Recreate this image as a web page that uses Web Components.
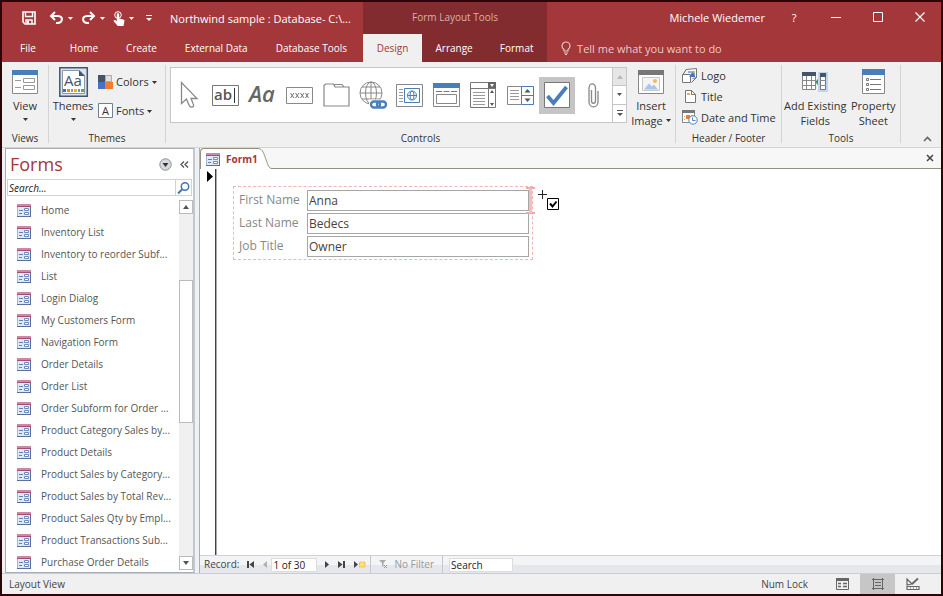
<!DOCTYPE html>
<html lang="en">
<head>
<meta charset="utf-8">
<title>Northwind sample : Database</title>
<style>
    html, body { margin: 0; height: 100%; }
    body {
        font-family: "Open Sans", "Noto Sans", sans-serif;
        font-size: 11px;
        line-height: 15px;
        color: #444;
        overflow: hidden;
        --red: #a4373a;
        --dark-red: #832c2f;
        --chrome: #f0f0f0;
        --line: #d4d4d4;
    }
</style>
</head>
<body>
<access-window></access-window>

<script>
// name: [width, height, markup]
const ICONS = {
    save: [14, 14, `<path fill="none" stroke="#fff" stroke-width="1.600" d="M1 1h12v12H3l-2-2z"/><path fill="none" stroke="#fff" stroke-width="1.400" d="M3.500 1v4.500h7V1M4 13V9h6v4"/><path fill="#fff" d="M5 10h2v3H5z"/>`],
    undo: [15, 14, `<path fill="none" stroke="#fff" stroke-width="2" d="M2 5h7c6 0 5 8-2 7"/><path fill="none" stroke="#fff" stroke-width="2" d="M6 1L2 5l4 4"/>`],
    redo: [15, 14, `<path fill="none" stroke="#fff" stroke-width="2" d="M13 5H6c-6 0-5 8 2 7"/><path fill="none" stroke="#fff" stroke-width="2" d="M9 1l4 4-4 4"/>`],
    touch: [12, 15, `<circle cx="5" cy="4" r="3.300" fill="none" stroke="#fff"/><path fill="#fff" d="M3.800 3.500c0-1.600 2.400-1.600 2.400 0v4l4 1c1 .2 1.400.8 1.200 1.700L10.500 15H4.800L.8 10.500c-.6-1 .8-2 1.700-1.200l1.300 1z"/>`],
    caret: [5, 3, `<path fill="currentColor" d="M0 0h5L2.500 3z"/>`],
    caretUp: [6, 4, `<path fill="currentColor" d="M0 4h6L3 0z"/>`],
    caretDown: [6, 4, `<path fill="currentColor" d="M0 0h6L3 4z"/>`],
    custom: [6, 6, `<path fill="currentColor" d="M0 0h6v1H0zM0 3h6L3 6z"/>`],
    min: [10, 10, `<path stroke="#fff" d="M0 5.500h10"/>`],
    max: [10, 10, `<path fill="none" stroke="#fff" d="M.5.5h9v9h-9z"/>`],
    close: [10, 10, `<path stroke="#fff" stroke-width="1.200" d="M.5.5l9 9M9.500.5l-9 9"/>`],
    bulb: [10, 14, `<path fill="none" stroke="#e9c9ca" stroke-width="1.200" d="M3 10V8.500C1.500 7.500 1 6.500 1 5a4 4 0 018 0c0 1.500-.5 2.500-2 3.500V10zM3 12h4M4 13.500h2"/>`],
    view: [26, 24, `<path fill="#fff" stroke="#8a8a8a" d="M.5.5h25v23H.5z"/><path fill="#4a7ebb" d="M0 0h26v5H0z"/><path fill="none" stroke="#9a9a9a" d="M3 10.500h6M3 17.500h6M11.500 8.500h11v4h-11zM11.500 15.500h11v4h-11z"/>`],
    themes: [29, 30, `<path fill="#d9e3f0" stroke="#44546a" stroke-width="1.500" d="M.8.8h27.500v28.500H.8z"/><path fill="#fff" stroke="#8a96a8" d="M3.500 3.500H20l5.500 5.500v17.500h-22z"/><path fill="#44546a" d="M20 3l6 6h-6z"/><text x="5" y="19" font-family="Open Sans, sans-serif" font-size="15" fill="#44546a">Aa</text><path fill="#3f6fbf" d="M4 22h3v3H4z"/><path fill="#ed7d31" d="M8 22h3v3H8z"/><path fill="#999" d="M12 22h2v3h-2z"/><path fill="#f4b400" d="M15 22h3v3h-3z"/><path fill="#5b9bd5" d="M19 22h2v3h-2z"/><path fill="#6aa84f" d="M22 22h3v3h-3z"/>`],
    colors: [15, 14, `<path fill="#44546a" d="M0 0h7v7H0z"/><path fill="#e0e0e0" stroke="#aaa" d="M7.500.5h6v6h-6z"/><path fill="#4472c4" d="M0 7h7v7H0z"/><path fill="#ed7d31" d="M7 7h8v7H7z"/>`],
    fonts: [15, 15, `<path fill="#fff" stroke="#6f7f96" d="M.5.5h14v14H.5z"/><text x="7.500" y="11.500" text-anchor="middle" font-family="Open Sans, sans-serif" font-size="11" fill="#333">A</text>`],
    pointer: [18, 28, `<path fill="#fff" stroke="#888" stroke-width="1.300" d="M1.500 1.500v21l5-4.500c1.500 3 2 7.500 4.500 8 3 .5 3-2 2-3.500L11 17.500h6z"/>`],
    textbox: [27, 21, `<path fill="#fff" stroke="#777" d="M.5.5h26v20H.5z"/><text x="2" y="15" font-family="Open Sans, sans-serif" font-size="15" font-weight="600" fill="#555">ab</text><path stroke="#333" d="M22.500 3v15"/>`],
    label: [27, 20, `<text x="0" y="17" font-family="Open Sans, sans-serif" font-style="italic" font-size="22" font-weight="600" fill="#666">Aa</text>`],
    xbutton: [27, 17, `<path fill="#fff" stroke="#888" d="M.5.5h26v16H.5z"/><path fill="none" stroke="#666" stroke-width=".9" d="M4.500 6l3.500 5M8 6l-3.500 5M9.500 6l3.500 5M13 6l-3.500 5M14.500 6l3.500 5M18 6l-3.500 5M19.500 6l3 5M22.500 6l-3 5"/>`],
    tabs: [27, 24, `<path fill="#fff" stroke="#888" stroke-width="1.200" d="M1 23V2.500L2.500 1h8L12 4h14v19zM12 4l-1-2.500h8L21 4"/>`],
    globe: [29, 28, `<g fill="none" stroke="#888"><circle cx="12" cy="12" r="11"/><ellipse cx="12" cy="12" rx="5.500" ry="11"/><path d="M1 12h22M3 6h18M3 18h18M12 1v22"/></g><path fill="#fff" d="M10 18.500h19V28H10z"/><g fill="none" stroke="#4a7ebb" stroke-width="2.400"><rect x="12" y="20.500" width="9" height="6" rx="3"/><rect x="18" y="20.500" width="9" height="6" rx="3"/></g>`],
    web: [27, 23, `<path fill="#fff" stroke="#888" d="M.5.5h26v22H.5z"/><path stroke="#999" d="M3 5.500h4M3 8.500h4M3 11.500h4M3 14.500h4M3 17.500h4"/><path fill="#fff" stroke="#4a7ebb" d="M8.500 4.500h15v14h-15z"/><g fill="none" stroke="#4a7ebb"><circle cx="16" cy="11.500" r="4.500"/><ellipse cx="16" cy="11.500" rx="2" ry="4.500"/><path d="M11 11.500h10"/></g>`],
    navctl: [27, 24, `<path fill="#fff" stroke="#888" d="M.5.5h26v23H.5z"/><path fill="#4a7ebb" d="M0 0h27v5H0z"/><path stroke="#777" d="M3 8.500h6M10.500 8.500h6M18 8.500h6"/><path fill="#fff" stroke="#888" d="M3.500 11.500h20v9h-20z"/>`],
    combo: [27, 26, `<path fill="#fff" stroke="#777" d="M.5.5h25v25H.5z"/><path fill="#666" d="M18 0h8v6h-8z"/><path fill="#fff" d="M20 2h4l-2 3z"/><path stroke="#777" d="M0 6.500h26M18.500 6v20"/><path stroke="#999" d="M3 10.500h12M3 13.500h12M3 16.500h12M3 19.500h12M3 22.500h12"/><path fill="#555" d="M20 11h4l-2-3zM20 21h4l-2 3z"/>`],
    list: [27, 19, `<path fill="#fff" stroke="#888" d="M.5.500h26v18H.5z"/><path stroke="#999" d="M3 4.500h9M3 7.500h9M3 10.500h9M3 13.500h9"/><path fill="#fff" stroke="#4a7ebb" d="M14.500.5h12v18h-12zM14 9.500h13"/><path fill="#555" d="M17.500 6.500h6l-3-3.500zM17.500 12.500h6l-3 3.500z"/>`],
    check: [26, 26, `<path fill="#fff" stroke="#777" d="M.5.5h25v25H.5z"/><path fill="none" stroke="#4a7ebb" stroke-width="3.800" d="M3.500 14l6 7L22.500 5"/>`],
    clip: [11, 25, `<path fill="none" stroke="#888" stroke-width="1.300" d="M3.500 7v11c0 3 4 3 4 0V5c0-5.500-6.500-5.500-6.500 0v14c0 6.500 9 6.500 9 0V8"/>`],
    image: [26, 24, `<path fill="#fff" stroke="#888" d="M.5.500h25v23H.5z"/><path fill="#777" d="M0 0h26v5H0z"/><path fill="#f4f4f4" stroke="#c8c8c8" d="M4.500 7.500h17v13h-17z"/><path fill="#a9c4e6" d="M6 19.500l5-6 3 3 2-2 4 5z"/><circle cx="17" cy="11" r="2" fill="#f2b661"/>`],
    logo: [16, 15, `<path fill="#fff" stroke="#777" d="M4.500 1.500l10-1v9l-4 1M.5 6.500h8v8h-8z"/><path fill="#8fb1dc" d="M6 3h7v5H9V5H6z"/><path fill="#4472c4" d="M7 9l4-5 2 4v1z"/><circle cx="12" cy="4" r="1" fill="#f0ad4e"/><path fill="none" stroke="#666" d="M4.500 1L1 6.500M14.500 9.500l-5 5"/>`],
    title: [11, 13, `<path fill="#fff" stroke="#777" d="M.5.500h6l4 4v8H.5z"/><path fill="none" stroke="#777" d="M6.500.5v4h4"/><path fill="#f0a95b" d="M2 3h3v2H2z"/>`],
    date: [16, 15, `<path fill="#fff" stroke="#888" d="M.5 1.500h12v11H.5z"/><path fill="#777" d="M0 0h13v3H0z"/><path fill="#ed7d31" d="M4 5h4v4H4z"/><path stroke="#aaa" d="M2 6.500h1M2 9.500h1M9 5.500h2"/><circle cx="11" cy="10" r="4.200" fill="#fff" stroke="#4a86c5"/><path fill="none" stroke="#4a86c5" d="M10.500 7.500v3h3"/>`],
    fields: [26, 20, `<path fill="#fff" stroke="#888" d="M.5.500h13v17H.5z"/><path fill="#44546a" d="M0 0h14v4H0z"/><path stroke="#888" d="M0 8.500h14M0 13.500h14M4.500 4v14M9.500 4v14"/><path fill="#bdd5ee" d="M16 0h10v20H16z"/><path fill="#fff" stroke="#777" d="M18.500 2.500h5v15h-5z"/><path fill="#44546a" d="M18 1h6v4h-6z"/><path stroke="#888" d="M18 8.500h6M18 13.500h6"/><path fill="#3c9a6a" d="M13 10l3-3v6z"/>`],
    sheet: [23, 25, `<path fill="#fff" stroke="#888" d="M.5.500h22v24H.5z"/><path fill="#4a7ebb" d="M0 0h23v6H0z"/><path stroke="#777" d="M8 10.500h11M8 15.500h11M8 20.500h11"/><path fill="#fff" stroke="#777" d="M4.500 9.500h2v2h-2zM4.500 14.500h2v2h-2zM4.500 19.500h2v2h-2z"/>`],
    collapse: [9, 6, `<path fill="none" stroke="#666" stroke-width="1.600" d="M1 5l3.500-3.500L8 5"/>`],
    form: [14, 13, `<path fill="#dfe8f6" d="M0 3h14v10H0z"/><path fill="#c98aa8" d="M0 0h14v3H0z"/><path fill="#a84a76" d="M0 2h14v1H0z"/><path fill="none" stroke="#a9b6cf" d="M.5 3v9"/><path fill="none" stroke="#5b6f9f" d="M0 12.500h14M13.500 3v10"/><path stroke="#5f7fb5" d="M2 6.500h4M2 9.500h3"/><path fill="#fff" stroke="#6f8ab8" d="M7.500 4.500h4v2h-4zM7.500 8.500h4v2h-4z"/>`],
    round: [13, 13, `<circle cx="6.500" cy="6.500" r="5.700" fill="#d7d9de" stroke="#8e9096"/><path fill="#333" d="M3.500 5h6l-3 4z"/>`],
    chevrons: [9, 7, `<path fill="none" stroke="#555" stroke-width="1.300" d="M4 .5l-3 3 3 3M8 .5l-3 3 3 3"/>`],
    search: [13, 12, `<circle cx="8" cy="4.500" r="3.700" fill="#fff" stroke="#4573b5" stroke-width="1.500"/><path stroke="#4573b5" stroke-width="2" d="M5 7.500l-4 4"/>`],
    x: [8, 8, `<path stroke="#444" stroke-width="1.500" d="M1 1l6 6M7 1L1 7"/>`],
    current: [6, 11, `<path d="M0 0l6 5.500L0 11z"/>`],
    first: [7, 7, `<path fill="#444" d="M0 0h2v7H0zM7 0v7L2.500 3.500z"/>`],
    prev: [4, 7, `<path fill="#b0b0b0" d="M4 0v7L0 3.500z"/>`],
    next: [4, 7, `<path fill="#444" d="M0 0v7l4-3.500z"/>`],
    last: [7, 7, `<path fill="#444" d="M5 0h2v7H5zM0 0v7l4.500-3.500z"/>`],
    add: [12, 7, `<path fill="#444" d="M0 0v7l4-3.500z"/><path fill="#ffe07a" stroke="#e8b93c" stroke-dasharray="2 1" d="M5.500 1h5.500v5H5.500z"/>`],
    filter: [9, 9, `<path fill="#aaa" d="M0 0h7L4.500 3v4L3 6V3z"/><path stroke="#999" d="M5 5l3 3M8 5L5 8"/>`],
    formView: [13, 12, `<path fill="none" stroke="#666" d="M.5.500h12v11H.5z"/><path fill="#666" d="M0 0h13v3H0z"/><path stroke="#666" stroke-width="1.400" d="M2 5.500h3M7 5.500h4M2 8.500h3M7 8.500h4"/>`],
    layoutView: [12, 12, `<path fill="none" stroke="#666" d="M1.500 0v12M10.500 0v12M0 1.500h12M0 10.500h12M3 4.500h6M3 7.500h6"/>`],
    designView: [14, 12, `<path fill="none" stroke="#666" stroke-width="1.200" d="M1 1v6l5-1zM1 8.500h12v3H1zM4 10h1M7 10h1M10 10h1"/><path stroke="#666" stroke-width="1.800" d="M6 6l6-5.500"/>`],
    dropper: [21, 20, `<path stroke="#222" d="M4.500 0v9M0 4.500h9"/><path fill="#fff" stroke="#000" d="M9.500 8.500h11v11h-11z"/><path fill="none" stroke="#000" stroke-width="2" d="M12 13.500l2.500 3 4-5"/>`],
    column: [9, 27, `<path stroke="#f4a6a8" stroke-width="2" d="M0 1h9M0 26h9"/><path stroke="#f7bcbd" stroke-width="3" d="M4.500 1v25"/>`],
    tabEdge: [14, 21, `<path fill="#fff" d="M0 0c5 0 6 7 9 14 2 5 2 6.500 5 6.500V21H0z"/><path fill="none" stroke="#979080" d="M0 .5c5 0 6 6 8 11 2 6 3 9 6 9"/>`]
};

const BUTTON = `button { font: inherit; color: inherit; background: none; border: 0; padding: 0; margin: 0; line-height: inherit; }`;

class AccessIcon extends HTMLElement {
    constructor() {
        super();
        this.attachShadow({ mode: "open" });
    }

    connectedCallback() {
        const [w, h, body] = ICONS[this.getAttribute("name")];
        this.shadowRoot.innerHTML = `
        <style>
            :host { display: block; flex: none; line-height: 0; }
            svg { display: block; overflow: visible; }
        </style>
        <svg width="${w}" height="${h}" viewBox="0 0 ${w} ${h}" aria-hidden="true">${body}</svg>`;
    }
}

class TitleBar extends HTMLElement {
    constructor() {
        super();
        this.attachShadow({ mode: "open" });
    }

    connectedCallback() {
        this.shadowRoot.innerHTML = `
        <style>
            ${BUTTON}
            :host {
                display: grid;
                grid-template-columns: auto auto 1fr;
                grid-template-rows: 32px 28px;
                background: var(--red);
                color: #fff;
            }
            .quick { display: flex; align-items: center; padding-left: 20px; gap: 4px; }
            .quick .save { margin-right: 9px; }
            .quick .drop { margin-right: 4px; }
            .quick .end { margin: 0 14px 0 4px; }
            .title { white-space: nowrap; flex: 1; }
            .context { background: var(--dark-red); color: #dcaeb0; font-size: 10px; text-align: center; line-height: 30px; }
            .account { display: flex; justify-content: flex-end; align-items: center; padding-bottom: 2px; }
            .account button { width: 42px; height: 30px; display: grid; place-items: center; }
            .user { padding-right: 8px; }
            nav { display: flex; font-size: 10px; }
            nav button { padding: 0 14px; white-space: nowrap; }
            nav .file { padding: 0 20px 0 18px; }
            nav .last { padding-right: 16px; }
            .tools { background: var(--dark-red); min-width: 184px; }
            .tools button { flex: 1 0 auto; padding: 0 13px; }
            .tools .active { background: var(--chrome); color: var(--red); }
            .tell { display: flex; align-items: center; gap: 6px; padding-left: 14px; color: #e9c9ca; }
        </style>
        <div class="quick">
            <button class="save" aria-label="Save"><access-icon name="save"></access-icon></button>
            <button aria-label="Undo"><access-icon name="undo"></access-icon></button>
            <button class="drop" aria-label="Undo list"><access-icon name="caret"></access-icon></button>
            <button aria-label="Redo"><access-icon name="redo"></access-icon></button>
            <button class="drop" aria-label="Redo list"><access-icon name="caret"></access-icon></button>
            <button aria-label="Touch mode"><access-icon name="touch"></access-icon></button>
            <button class="drop" aria-label="Touch options"><access-icon name="caret"></access-icon></button>
            <button class="end" aria-label="Customize"><access-icon name="custom"></access-icon></button>
            <span class="title">Northwind sample : Database- C:\\...</span>
        </div>
        <div class="context">Form Layout Tools</div>
        <div class="account">
            <span class="user">Michele Wiedemer</span>
            <button aria-label="Help">?</button>
            <button aria-label="Minimize"><access-icon name="min"></access-icon></button>
            <button aria-label="Maximize"><access-icon name="max"></access-icon></button>
            <button aria-label="Close"><access-icon name="close"></access-icon></button>
        </div>
        <nav>
            <button class="file">File</button>
            <button>Home</button>
            <button>Create</button>
            <button>External Data</button>
            <button class="last">Database Tools</button>
        </nav>
        <nav class="tools">
            <button class="active">Design</button>
            <button>Arrange</button>
            <button>Format</button>
        </nav>
        <button class="tell"><access-icon name="bulb"></access-icon>Tell me what you want to do</button>`;
    }
}

class RibbonGroup extends HTMLElement {
    constructor() {
        super();
        this.attachShadow({ mode: "open" });
    }

    connectedCallback() {
        this.shadowRoot.innerHTML = `
        <style>
            :host { display: flex; flex-direction: column; margin: 3px 0 4px; border-right: 1px solid var(--line); box-sizing: border-box; }
            .body { display: flex; flex: 1; }
            .label { text-align: center; font-size: 10px; line-height: 10px; }
        </style>
        <div class="body"><slot></slot></div>
        <div class="label">${this.getAttribute("label")}</div>`;
    }
}

// big: icon over a one or two line caption; otherwise icon and text in a row
class RibbonButton extends HTMLElement {
    constructor() {
        super();
        this.attachShadow({ mode: "open" });
    }

    connectedCallback() {
        const big = this.hasAttribute("big");
        const caret = this.hasAttribute("menu") ? `<access-icon class="caret" name="caret"></access-icon>` : "";
        this.shadowRoot.innerHTML = `
        <style>
            ${BUTTON}
            :host { display: block; }
            button { display: flex; align-items: center; gap: 3px; white-space: nowrap; height: 21px; }
            .icon { display: grid; place-items: center; min-width: 16px; }
            .big { flex-direction: column; gap: 0; width: 100%; height: auto; }
            .big .icon { height: 33px; }
            .big .text { display: flex; flex-direction: column; align-items: center; }
            .caret { margin-top: 1px; }
            .big > .caret { margin-top: 5px; }
        </style>
        <button class="${big ? "big" : ""}">
            <span class="icon"><access-icon name="${this.getAttribute("icon")}"></access-icon></span>
            <span class="text"><slot></slot></span>${caret}
        </button>`;
    }
}

class ControlGallery extends HTMLElement {
    constructor() {
        super();
        this.attachShadow({ mode: "open" });
    }

    connectedCallback() {
        const items = [
            ["pointer", "Select"], ["textbox", "Text Box"], ["label", "Label"], ["xbutton", "Button"],
            ["tabs", "Tab Control"], ["globe", "Hyperlink"], ["web", "Web Browser"], ["navctl", "Navigation"],
            ["combo", "Combo Box"], ["list", "List Box"], ["check", "Check Box"], ["clip", "Attachment"]
        ];
        this.shadowRoot.innerHTML = `
        <style>
            ${BUTTON}
            :host { display: flex; background: #fff; border: 1px solid #c6c6c6; height: 54px; }
            .items { flex: 1; display: flex; align-items: center; justify-content: space-between; }
            .items button { width: 36px; height: 37px; display: grid; place-items: center; }
            .items .on { background: #c5c5c5; }
            .scroll { display: flex; flex-direction: column; width: 13px; border-left: 1px solid #c6c6c6; color: #555; }
            .scroll button { flex: 1; display: grid; place-items: center; }
            .scroll button + button { border-top: 1px solid #c6c6c6; }
            .scroll .off { background: #e6e6e6; color: #b8b8b8; }
        </style>
        <div class="items">${items.map(([icon, name]) => `
            <button class="${icon === "check" ? "on" : ""}" aria-label="${name}"><access-icon name="${icon}"></access-icon></button>`).join("")}
        </div>
        <div class="scroll">
            <button class="off" aria-label="Previous row"><access-icon name="caretUp"></access-icon></button>
            <button aria-label="Next row"><access-icon name="caret"></access-icon></button>
            <button aria-label="More"><access-icon name="custom"></access-icon></button>
        </div>`;
    }
}

class AccessRibbon extends HTMLElement {
    constructor() {
        super();
        this.attachShadow({ mode: "open" });
    }

    connectedCallback() {
        this.shadowRoot.innerHTML = `
        <style>
            ${BUTTON}
            :host { display: flex; height: 85px; background: var(--chrome); border-bottom: 1px solid var(--line); color: #333; }
            .views { width: 47px; }
            .views ribbon-button { flex: 1; }
            .themes { width: 117px; }
            .themes > ribbon-button { width: 48px; }
            .stack { display: flex; flex-direction: column; gap: 8px; padding-top: 6px; }
            .controls { flex: 1; }
            control-gallery { flex: 1; margin: 2px 0 0 4px; }
            .controls ribbon-button { width: 48px; }
            .header { width: 106px; }
            .header .stack { gap: 0; padding: 0 0 0 6px; }
            .tools { width: 119px; }
            .tools .fields { flex: 1; padding-left: 2px; }
            .tools .sheet { width: 54px; }
            .collapse { margin-left: auto; padding: 0 9px 5px 22px; align-self: flex-end; }
            .menu { display: flex; align-items: center; gap: 3px; }
        </style>
        <ribbon-group class="views" label="Views">
            <ribbon-button big menu icon="view">View</ribbon-button>
        </ribbon-group>
        <ribbon-group class="themes" label="Themes">
            <ribbon-button big menu icon="themes">Themes</ribbon-button>
            <div class="stack">
                <ribbon-button menu icon="colors">Colors</ribbon-button>
                <ribbon-button menu icon="fonts">Fonts</ribbon-button>
            </div>
        </ribbon-group>
        <ribbon-group class="controls" label="Controls">
            <control-gallery></control-gallery>
            <ribbon-button big icon="image">
                <span>Insert</span>
                <span class="menu">Image<access-icon name="caret"></access-icon></span>
            </ribbon-button>
        </ribbon-group>
        <ribbon-group class="header" label="Header / Footer">
            <div class="stack">
                <ribbon-button icon="logo">Logo</ribbon-button>
                <ribbon-button icon="title">Title</ribbon-button>
                <ribbon-button icon="date">Date and Time</ribbon-button>
            </div>
        </ribbon-group>
        <ribbon-group class="tools" label="Tools">
            <ribbon-button class="fields" big icon="fields"><span>Add Existing</span><span>Fields</span></ribbon-button>
            <ribbon-button class="sheet" big icon="sheet"><span>Property</span><span>Sheet</span></ribbon-button>
        </ribbon-group>
        <button class="collapse" aria-label="Collapse the ribbon"><access-icon name="collapse"></access-icon></button>`;
    }
}

class NavPane extends HTMLElement {
    constructor() {
        super();
        this.attachShadow({ mode: "open" });
    }

    connectedCallback() {
        const forms = [
            "Home", "Inventory List", "Inventory to reorder Subf...", "List", "Login Dialog",
            "My Customers Form", "Navigation Form", "Order Details", "Order List",
            "Order Subform for Order ...", "Product Category Sales by...", "Product Details",
            "Product Sales by Category...", "Product Sales by Total Rev...",
            "Product Sales Qty by Empl...", "Product Transactions Sub...", "Purchase Order Details"
        ];
        this.shadowRoot.innerHTML = `
        <style>
            ${BUTTON}
            :host {
                display: flex;
                flex-direction: column;
                width: 187px;
                background: #fff;
                border: 1px solid #a9adb5;
                border-right: 2px solid #c3c8cf;
                min-height: 0;
            }
            header { display: flex; align-items: center; gap: 8px; height: 30px; padding: 0 4px; }
            h1 { flex: 1; margin: 0; font-size: 18px; line-height: 30px; font-weight: 400; color: var(--red); }
            .search { display: flex; margin: 0 1px 3px; border: 1px solid #cfd3d8; }
            input { flex: 1; min-width: 0; height: 15px; border: 0; padding: 0 1px; font: italic 10px "Open Sans", sans-serif; color: #222; outline: 0; }
            input::placeholder { color: #222; }
            .search button { width: 16px; border-left: 1px solid #cfd3d8; display: grid; place-items: center; }
            .body { flex: 1; display: flex; min-height: 0; }
            ul { flex: 1; list-style: none; margin: 0; padding: 0; overflow: hidden; min-width: 0; }
            li button { display: flex; align-items: center; gap: 10px; width: 100%; height: 22px; padding-left: 11px; font-size: 10px; color: #555; white-space: nowrap; }
            .bar { display: flex; flex-direction: column; width: 14px; background: #f0f0f0; margin: 1px 0 2px; color: #555; }
            .bar button { height: 14px; background: #fff; border: 1px solid #bbb; display: grid; place-items: center; }
            .track { flex: 1; display: flex; flex-direction: column; }
            .before { flex: 67; }
            .thumb { flex: 142; background: #fff; border: 1px solid #bbb; }
            .after { flex: 134; }
        </style>
        <header>
            <h1>Forms</h1>
            <button aria-label="Pane options"><access-icon name="round"></access-icon></button>
            <button aria-label="Shrink pane"><access-icon name="chevrons"></access-icon></button>
        </header>
        <div class="search">
            <input type="text" aria-label="Search forms" placeholder="Search...">
            <button aria-label="Search"><access-icon name="search"></access-icon></button>
        </div>
        <div class="body">
            <ul>${forms.map(f => `<li><button><access-icon name="form"></access-icon>${f}</button></li>`).join("")}</ul>
            <div class="bar">
                <button aria-label="Scroll up"><access-icon name="caretUp"></access-icon></button>
                <div class="track"><div class="before"></div><div class="thumb"></div><div class="after"></div></div>
                <button aria-label="Scroll down"><access-icon name="caretDown"></access-icon></button>
            </div>
        </div>`;
    }
}

class FormLayout extends HTMLElement {
    constructor() {
        super();
        this.attachShadow({ mode: "open" });
    }

    connectedCallback() {
        const fields = [["first", "First Name", "Anna"], ["last", "Last Name", "Bedecs"], ["job", "Job Title", "Owner"]];
        this.shadowRoot.innerHTML = `
        <style>
            :host { display: block; position: relative; width: 300px; box-sizing: border-box; border: 1px dashed #f2b5b6; padding: 3px 3px 0; }
            .row { display: flex; align-items: flex-start; height: 23px; font-size: 12px; }
            label { width: 68px; padding-left: 2px; line-height: 19px; color: #888; }
            input { flex: 1; min-width: 0; height: 21px; box-sizing: border-box; border: 1px solid #a6a6a6; padding: 0 1px; font: 12px "Open Sans", sans-serif; color: #444; outline: 0; }
            /* drop marker and mouse pointer float over the layout grid */
            .marker { position: absolute; top: 0; right: -3px; }
            .mouse { position: absolute; top: 3px; left: 304px; }
        </style>
        ${fields.map(([id, label, value]) => `
        <div class="row"><label for="${id}">${label}</label><input id="${id}" type="text" value="${value}"></div>`).join("")}
        <access-icon class="marker" name="column"></access-icon>
        <access-icon class="mouse" name="dropper"></access-icon>`;
    }
}

class RecordBar extends HTMLElement {
    constructor() {
        super();
        this.attachShadow({ mode: "open" });
    }

    connectedCallback() {
        this.shadowRoot.innerHTML = `
        <style>
            ${BUTTON}
            :host {
                display: flex;
                align-items: center;
                height: 17px;
                border-top: 1px solid #cfd2d8;
                padding-left: 4px;
                font-size: 10px;
                background: linear-gradient(#f3f4f6 50%, #e6e7ec 50%);
            }
            .nav { display: flex; align-items: center; gap: 9px; padding: 0 4px 0 8px; }
            input { width: 46px; height: 14px; box-sizing: border-box; border: 1px solid #ddd; padding: 0 1px; font: 10px "Open Sans", sans-serif; color: #222; background: #fff; outline: 0; }
            .find { width: 64px; margin-left: 6px; }
            .find::placeholder { color: #222; }
            .filter { display: flex; align-items: center; gap: 6px; padding: 0 8px; border: solid #c3c6cc; border-width: 0 1px; height: 17px; color: #999; }
        </style>
        <label for="record">Record:</label>
        <span class="nav">
            <button aria-label="First record"><access-icon name="first"></access-icon></button>
            <button aria-label="Previous record"><access-icon name="prev"></access-icon></button>
        </span>
        <input id="record" type="text" value="1 of 30">
        <span class="nav">
            <button aria-label="Next record"><access-icon name="next"></access-icon></button>
            <button aria-label="Last record"><access-icon name="last"></access-icon></button>
            <button aria-label="New record"><access-icon name="add"></access-icon></button>
        </span>
        <button class="filter"><access-icon name="filter"></access-icon>No Filter</button>
        <input class="find" type="text" aria-label="Search records" placeholder="Search">`;
    }
}

class DocumentArea extends HTMLElement {
    constructor() {
        super();
        this.attachShadow({ mode: "open" });
    }

    connectedCallback() {
        this.shadowRoot.innerHTML = `
        <style>
            ${BUTTON}
            :host { display: flex; flex-direction: column; flex: 1; min-width: 0; background: #fff; border-left: 1px solid #a9adb5; }
            .strip { display: flex; height: 21px; background: #f7f7f7; }
            .tab { display: flex; align-items: center; gap: 6px; height: 21px; padding-left: 5px; background: #fff; border-top: 1px solid #979080; border-left: 1px solid #979080; border-radius: 4px 0 0 0; font-size: 10px; font-weight: 700; color: var(--red); }
            .rest { flex: 1; display: flex; justify-content: flex-end; align-items: center; padding-right: 7px; border-bottom: 1px solid #979080; }
            .page { flex: 1; display: flex; min-height: 0; }
            .selector { width: 16px; box-sizing: border-box; padding: 2px 0 0 7px; border-right: 1px solid #444; box-shadow: 1px 0 #aaa; }
            .canvas { flex: 1; padding: 17px 0 0 17px; }
        </style>
        <div class="strip">
            <button class="tab"><access-icon name="form"></access-icon>Form1</button>
            <access-icon name="tabEdge"></access-icon>
            <div class="rest"><button aria-label="Close form"><access-icon name="x"></access-icon></button></div>
        </div>
        <div class="page">
            <div class="selector"><access-icon name="current"></access-icon></div>
            <div class="canvas"><form-layout></form-layout></div>
        </div>
        <record-bar></record-bar>`;
    }
}

class StatusBar extends HTMLElement {
    constructor() {
        super();
        this.attachShadow({ mode: "open" });
    }

    connectedCallback() {
        this.shadowRoot.innerHTML = `
        <style>
            ${BUTTON}
            :host { display: flex; align-items: center; height: 20px; padding: 0 11px 0 7px; background: var(--chrome); border-top: 1px solid #c9ccd2; font-size: 10px; }
            .mode { flex: 1; }
            .lock { padding-right: 17px; }
            button { width: 35px; height: 20px; display: grid; place-items: center; }
            .on { background: #c6c6c6; }
        </style>
        <span class="mode">Layout View</span>
        <span class="lock">Num Lock</span>
        <button aria-label="Form View"><access-icon name="formView"></access-icon></button>
        <button class="on" aria-label="Layout View"><access-icon name="layoutView"></access-icon></button>
        <button aria-label="Design View"><access-icon name="designView"></access-icon></button>`;
    }
}

class AccessWindow extends HTMLElement {
    constructor() {
        super();
        this.attachShadow({ mode: "open" });
    }

    connectedCallback() {
        this.shadowRoot.innerHTML = `
        <style>
            :host { display: flex; flex-direction: column; height: 100vh; box-sizing: border-box; border: 2px solid #2c0508; }
            .work { flex: 1; display: flex; gap: 4px; min-height: 0; padding-left: 3px; background: #f0f1f4; }
        </style>
        <title-bar></title-bar>
        <access-ribbon></access-ribbon>
        <div class="work">
            <nav-pane></nav-pane>
            <document-area></document-area>
        </div>
        <status-bar></status-bar>`;
    }
}

customElements.define('access-icon', AccessIcon);
customElements.define('title-bar', TitleBar);
customElements.define('ribbon-group', RibbonGroup);
customElements.define('ribbon-button', RibbonButton);
customElements.define('control-gallery', ControlGallery);
customElements.define('access-ribbon', AccessRibbon);
customElements.define('nav-pane', NavPane);
customElements.define('form-layout', FormLayout);
customElements.define('record-bar', RecordBar);
customElements.define('document-area', DocumentArea);
customElements.define('status-bar', StatusBar);
customElements.define('access-window', AccessWindow);
</script>
</body>
</html>
